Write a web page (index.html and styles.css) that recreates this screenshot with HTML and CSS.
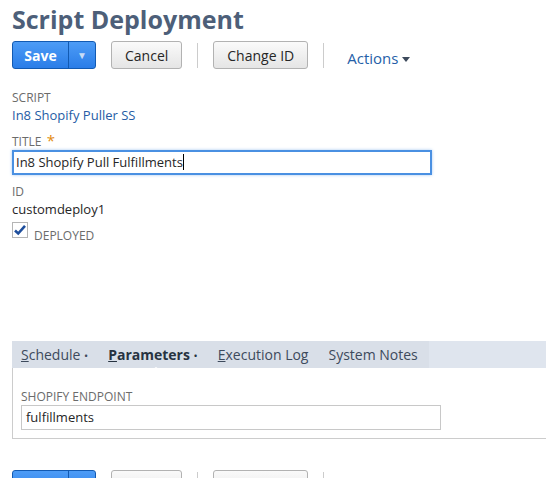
FILE: index.html
```html
<!DOCTYPE html>
<html lang="en">
<head>
    <meta charset="UTF-8">
    <title>Script Deployment</title>
    <link rel="stylesheet" href="styles.css">
</head>
<body>
    <div class="page">
        <h1 class="title">Script Deployment</h1>

        <div class="toolbar">
            <div class="split">
                <button class="save">Save</button>
                <button class="drop">&#9660;</button>
            </div>
            <button class="btn">Cancel</button>
            <span class="sep"></span>
            <button class="btn">Change ID</button>
            <span class="sep"></span>
            <span class="actions">Actions <span class="caret"></span></span>
        </div>

        <div class="field first">
            <div class="label">Script</div>
            <div class="value link">In8 Shopify Puller SS</div>
        </div>

        <div class="field">
            <div class="label">Title <span class="req">*</span></div>
            <div class="input focus">In8 Shopify Pull Fulfillments<span class="cursor"></span></div>
        </div>

        <div class="field after-input">
            <div class="label">ID</div>
            <div class="value">customdeploy1</div>
        </div>

        <div class="check-row">
            <span class="checkbox">
                <svg width="14" height="14" viewBox="0 0 14 14"><path d="M2 7.5 L5.2 10.5 L12 2.8" fill="none" stroke="#1e4e9c" stroke-width="2.6"/></svg>
            </span>
            <span class="label">Deployed</span>
        </div>

        <div class="tabs">
            <div class="tabbar">
                <div class="tabgroup">
                    <span class="tab"><u>S</u>chedule <b class="dot">&bull;</b></span>
                    <span class="tab active"><u>P</u>arameters <b class="dot">&bull;</b></span>
                    <span class="tab"><u>E</u>xecution Log</span>
                    <span class="tab">System Notes</span>
                </div>
            </div>
            <div class="tabbody">
                <div class="label">Shopify Endpoint</div>
                <div class="input plain">fulfillments</div>
            </div>
        </div>

        <div class="toolbar bottom">
            <div class="split">
                <button class="save">Save</button>
                <button class="drop">&#9660;</button>
            </div>
            <button class="btn">Cancel</button>
            <span class="sep"></span>
            <button class="btn">Change ID</button>
            <span class="sep"></span>
        </div>
    </div>
</body>
</html>
```

FILE: styles.css
```css
body {
    margin: 0;
    font-family: "Open Sans", "Liberation Sans", sans-serif;
    background-color: white;
    color: #333;
    overflow: hidden;
}

.page {
    padding: 3px 0 0 12px;
}

.title {
    margin: 0;
    font-size: 25px;
    font-weight: bold;
    color: #4d5f79;
    line-height: 33px;
}

.toolbar {
    display: flex;
    align-items: center;
    margin-top: 5px;
    height: 28px;
}

.split {
    display: flex;
    height: 28px;
    border: 1px solid #125ab2;
    border-radius: 3px;
    background: linear-gradient(#4d9cf6, #2a7de8);
    box-sizing: border-box;
}

.split button {
    border: none;
    background: none;
    color: white;
    font-family: inherit;
    cursor: pointer;
}

.save {
    width: 56px;
    font-size: 14px;
    font-weight: bold;
    border-right: 1px solid #125ab2 !important;
}

.drop {
    width: 26px;
    font-size: 10px;
    color: #c8dcf5 !important;
    padding: 0;
}

.btn {
    margin-left: 15px;
    height: 28px;
    padding: 0 13px;
    border: 1px solid #b2b2b2;
    border-radius: 3px;
    background: linear-gradient(#fafafa, #e5e5e5);
    font-family: inherit;
    font-size: 14px;
    color: #262626;
}

.sep {
    width: 1px;
    height: 25px;
    margin-left: 15px;
    background-color: #ccc;
}

.actions {
    margin-left: 23px;
    margin-top: 6px;
    font-size: 15px;
    color: #255fa8;
}

.caret {
    display: inline-block;
    border-left: 4px solid transparent;
    border-right: 4px solid transparent;
    border-top: 5px solid #3d4a5c;
    vertical-align: 2px;
}

.field {
    margin-top: 15px;
    margin-bottom: -8px;
}

.field.first {
    margin-top: 20px;
}

.field.after-input {
    margin-top: 16px;
}

.label {
    font-size: 12px;
    text-transform: uppercase;
    color: #6b6b6b;
    line-height: 17px;
}

.req {
    color: #e38b0d;
    font-size: 15px;
    margin-left: 2px;
}

.value {
    font-size: 13px;
    line-height: 19px;
    color: #262626;
}

.value.link {
    color: #255ca5;
}

.input {
    box-sizing: border-box;
    height: 25px;
    padding: 2px 4px;
    font-size: 13px;
    line-height: 19px;
    color: #262626;
    background-color: white;
    border: 1px solid #c8c8c8;
}

.input.focus {
    width: 420px;
    border: 2px solid #4a90e2;
    box-shadow: 0 0 3px #a7c9f0;
    padding: 1px 2px;
}

.cursor {
    display: inline-block;
    width: 1px;
    height: 16px;
    background-color: #000;
    vertical-align: -3px;
}

.check-row {
    display: flex;
    align-items: flex-start;
    margin-top: 11px;
    gap: 6px;
}

.checkbox {
    display: flex;
    align-items: center;
    justify-content: center;
    width: 14px;
    height: 14px;
    border: 1px solid #b5b5b5;
}

.check-row .label {
    margin-top: 5px;
}

.tabs {
    margin-top: 97px;
}

.tabbar {
    display: flex;
    height: 27px;
    background-color: #dfe5ee;
}

.tabgroup {
    display: flex;
    align-items: center;
    flex-shrink: 0;
    width: 408px;
    padding-left: 9px;
    background-color: #d9dfe8;
    white-space: nowrap;
}

.tab {
    position: relative;
    flex-shrink: 0;
    font-size: 14px;
    color: #3d4a5c;
    margin-right: 20px;
}

.tab:last-child {
    margin-right: 0;
}

.tab u {
    text-decoration-thickness: 1px;
}

.tab .dot {
    font-size: 11px;
    font-weight: normal;
}

.tab.active {
    font-weight: bold;
    color: #273341;
}

.tab.active::after {
    content: "";
    position: absolute;
    left: 42px;
    bottom: -7px;
    border-left: 6px solid transparent;
    border-right: 6px solid transparent;
    border-bottom: 4px solid white;
}

.tabbody {
    height: 71px;
    box-sizing: border-box;
    border-left: 1px solid #ccc;
    border-bottom: 1px solid #ccc;
    padding: 20px 0 0 8px;
}

.input.plain {
    width: 420px;
}

.toolbar.bottom {
    margin-top: 31px;
}
```
